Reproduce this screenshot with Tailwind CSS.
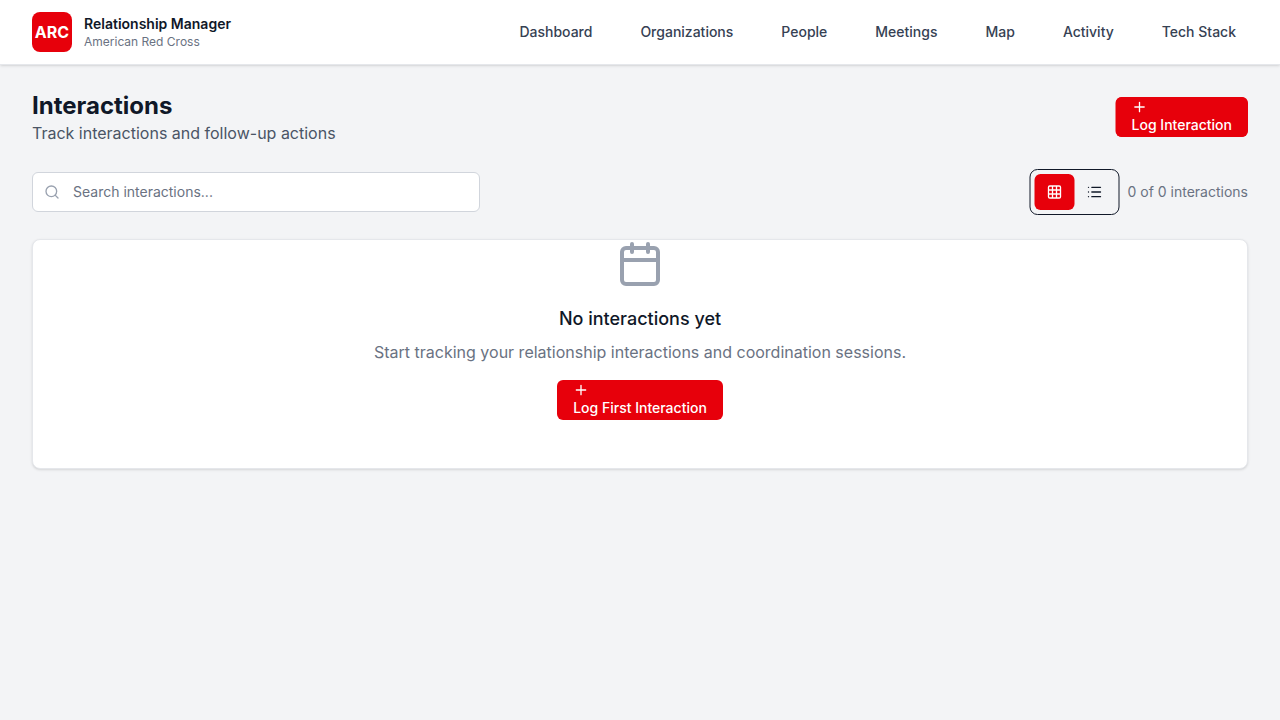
<!DOCTYPE html>
<html lang="en">
<head>
<meta charset="utf-8">
<title>Relationship Manager</title>
<script src="https://cdn.jsdelivr.net/npm/@tailwindcss/browser@4"></script>
</head>
<body class="min-h-screen bg-gray-100 font-['Inter',sans-serif] text-gray-900 antialiased">
<header class="flex h-[65px] items-center justify-between border-b border-gray-200 bg-white px-8 shadow-sm">
  <div class="flex items-center gap-3">
    <div class="flex size-10 items-center justify-center rounded-lg bg-red-600 text-base font-bold text-white">ARC</div>
    <div>
      <div class="text-sm leading-5 font-semibold">Relationship Manager</div>
      <div class="text-xs leading-4 text-gray-500">American Red Cross</div>
    </div>
  </div>
  <nav class="flex gap-6 text-sm font-medium text-gray-700">
    <a class="px-3 py-2">Dashboard</a>
    <a class="px-3 py-2">Organizations</a>
    <a class="px-3 py-2">People</a>
    <a class="px-3 py-2">Meetings</a>
    <a class="px-3 py-2">Map</a>
    <a class="px-3 py-2">Activity</a>
    <a class="px-3 py-2">Tech Stack</a>
  </nav>
</header>
<main class="px-8 pt-6">
  <div class="flex items-center justify-between">
    <div>
      <h1 class="pt-px text-2xl leading-[31px] font-bold">Interactions</h1>
      <p class="text-base leading-6 text-gray-600">Track interactions and follow-up actions</p>
    </div>
    <button class="flex h-10 flex-col items-start justify-center rounded-md bg-red-600 px-4 text-sm font-medium whitespace-nowrap text-white shadow-[-0.5px_0_0_#e7000b]">
      <svg class="size-4 -translate-x-[0.5px]" viewBox="0 0 24 24" fill="none" stroke="currentColor" stroke-width="2" stroke-linecap="round"><path d="M5 12h14M12 5v14"/></svg>
      <span>Log Interaction</span>
    </button>
  </div>
  <div class="mt-6 flex items-center justify-between">
    <div class="flex h-10 w-[448px] items-center gap-[13px] rounded-md border border-gray-300 bg-white pr-3 pl-[11px] text-sm text-gray-500">
      <svg class="size-4 text-gray-400" viewBox="0 0 24 24" fill="none" stroke="currentColor" stroke-width="2" stroke-linecap="round"><circle cx="11" cy="11" r="8"/><path d="m21 21-4.34-4.34"/></svg>
      <span>Search interactions...</span>
    </div>
    <div class="flex items-center gap-2">
      <div class="flex -translate-x-[0.5px] rounded-lg border border-gray-900 p-1">
        <div class="flex h-9 w-10 items-center justify-center rounded-md bg-red-600 text-white"><svg class="size-4" viewBox="0 0 24 24" fill="none" stroke="currentColor" stroke-width="2"><rect x="3" y="3" width="18" height="18" rx="2"/><path d="M3 9h18M3 15h18M9 3v18M15 3v18"/></svg></div>
        <div class="flex h-9 w-10 items-center justify-center"><svg class="size-4" viewBox="0 0 24 24" fill="none" stroke="currentColor" stroke-width="2" stroke-linecap="round"><path d="M8 5h13M8 12h13M8 19h13M3 5h.01M3 12h.01M3 19h.01"/></svg></div>
      </div>
      <span class="text-sm whitespace-nowrap text-gray-500">0 of 0 interactions</span>
    </div>
  </div>
  <section class="mt-6 flex h-[230px] flex-col items-center rounded-lg border border-gray-200 bg-white shadow-sm">
    <svg class="size-12 shrink-0 text-gray-400" viewBox="0 0 24 24" fill="none" stroke="currentColor" stroke-width="2" stroke-linecap="round" stroke-linejoin="round"><path d="M8 2v4M16 2v4M3 10h18"/><rect x="3" y="4" width="18" height="18" rx="2"/></svg>
    <h3 class="mt-[17px] text-lg leading-7 font-medium">No interactions yet</h3>
    <p class="mt-[7px] text-base leading-6 text-gray-500">Start tracking your relationship interactions and coordination sessions.</p>
    <button class="mt-4 flex h-10 flex-col items-start justify-center rounded-md bg-red-600 px-4 text-sm font-medium text-white">
      <svg class="size-4" viewBox="0 0 24 24" fill="none" stroke="currentColor" stroke-width="2" stroke-linecap="round"><path d="M5 12h14M12 5v14"/></svg>
      <span>Log First Interaction</span>
    </button>
  </section>
</main>
</body>
</html>
